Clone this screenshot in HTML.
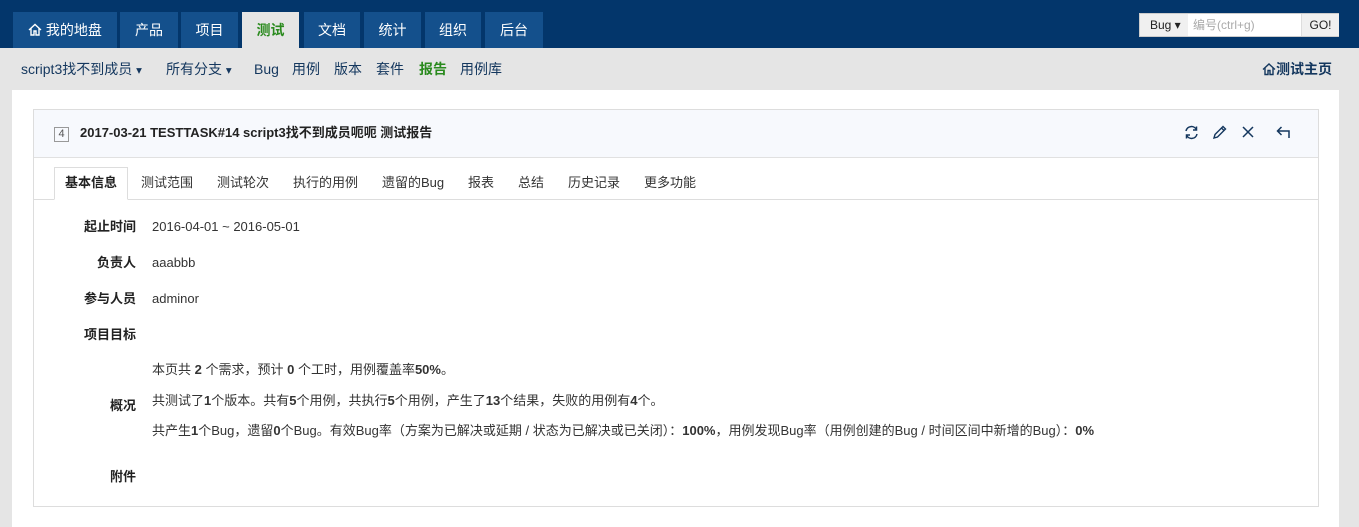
<!DOCTYPE html>
<html><head><meta charset="utf-8"><style>
*{margin:0;padding:0;box-sizing:border-box}
body{width:1359px;height:527px;overflow:hidden;background:#e5e5e5;font-family:"Liberation Sans","Noto Sans CJK SC",sans-serif;font-size:13px;line-height:16px;color:#333;position:relative}
.top{position:absolute;left:0;top:0;width:1359px;height:48px;background:#03366b}
.tab{position:absolute;top:12px;height:36px;background:#14508c;color:#fff;font-size:14px;line-height:36px;text-align:center}
.tab.act{background:#e5e5e5;color:#2a8a1e;font-weight:bold}
.sub{position:absolute;top:60px;font-size:14px;line-height:18px}
.sub span{position:absolute;white-space:nowrap;color:#14375e}
.panel{position:absolute;left:12px;top:90px;width:1327px;height:437px;background:#fff}
.box{position:absolute;left:33px;top:109px;width:1286px;height:398px;border:1px solid #ddd;background:#fff}
.hd{position:absolute;left:0;top:0;width:100%;height:48px;background:#f7f9fd;border-bottom:1px solid #e1e1e1}
.t{position:absolute;white-space:nowrap}
.lbl{position:absolute;font-weight:bold;color:#222;text-align:right;width:60px;left:76px}
.v{position:absolute;left:152px;white-space:nowrap;font-size:13px}
</style></head><body>
<div class="top"></div>
<div class="tab" style="left:13px;width:104px"><svg width="14" height="13" viewBox="0 0 14 13" style="vertical-align:-1px"><path d="M1 7L7 1.5 13 7M3 5.5V12H6V8H8V12H11V5.5" fill="none" stroke="#fff" stroke-width="1.4"/></svg> 我的地盘</div>
<div class="tab" style="left:120px;width:58px">产品</div>
<div class="tab" style="left:181px;width:57px">项目</div>
<div class="tab act" style="left:242px;width:57px">测试</div>
<div class="tab" style="left:304px;width:56px">文档</div>
<div class="tab" style="left:364px;width:57px">统计</div>
<div class="tab" style="left:425px;width:56px">组织</div>
<div class="tab" style="left:485px;width:58px">后台</div>
<div style="position:absolute;left:1139px;top:13px;width:200px;height:24px;background:#fff;border:1px solid #ccc"></div>
<div style="position:absolute;left:1140px;top:14px;width:48px;height:22px;background:#f0f0f0;font-size:12px;line-height:22px;padding-left:10px;color:#222">Bug ▾</div>
<div style="position:absolute;left:1193px;top:14px;font-size:12px;line-height:22px;color:#aaa">编号(ctrl+g)</div>
<div style="position:absolute;left:1301px;top:14px;width:38px;height:22px;background:#f0f0f0;border-left:1px solid #ddd;font-size:12px;line-height:22px;text-align:center;color:#222">GO!</div>
<div class="sub">
<span style="left:21px">script3找不到成员 <small>▾</small></span>
<span style="left:166px">所有分支 <small>▾</small></span>
<span style="left:254px">Bug</span>
<span style="left:292px">用例</span>
<span style="left:334px">版本</span>
<span style="left:376px">套件</span>
<span style="left:419px;color:#2a8a1e;font-weight:bold">报告</span>
<span style="left:460px">用例库</span>
<span style="left:1262px;font-weight:bold;font-size:14px"><svg width="14" height="14" viewBox="0 0 14 13" style="vertical-align:-2px"><path d="M1 7L7 1.5 13 7M3 5.5V12H6V8H8V12H11V5.5" fill="none" stroke="#14375e" stroke-width="1.4"/></svg>测试主页</span>
</div>
<div class="panel"></div>
<div class="box">
<div class="hd">
<div class="t" style="left:20px;top:17px;width:15px;height:15px;border:1px solid #999;font-size:11px;line-height:13px;text-align:center;color:#555">4</div>
<div class="t" style="left:46px;top:15px;font-size:13px;font-weight:bold;color:#222">2017-03-21 TESTTASK#14 script3找不到成员呃呃 测试报告</div>
<svg class="t" style="left:1150px;top:15px" width="15" height="15" viewBox="0 0 15 15" fill="none" stroke="#14375e" stroke-width="1.5"><path d="M2 6A5.5 5.5 0 0 1 12.5 5M13 9A5.5 5.5 0 0 1 2.5 10M12.5 1.5V5H9M2.5 13.5V10H6"/></svg>
<svg class="t" style="left:1178px;top:15px" width="15" height="15" viewBox="0 0 15 15" fill="none" stroke="#14375e" stroke-width="1.4"><path d="M2 13L3 9.5 11 1.5 13.5 4 5.5 12ZM9.5 3L12 5.5"/></svg>
<svg class="t" style="left:1207px;top:15px" width="14" height="14" viewBox="0 0 14 14" stroke="#14375e" stroke-width="1.5"><path d="M2 2L12 12M12 2L2 12"/></svg>
<svg class="t" style="left:1242px;top:15px" width="16" height="14" viewBox="0 0 16 14" fill="none" stroke="#14375e" stroke-width="1.5"><path d="M5.5 2L1.5 6 5.5 10M1.5 6H13V13"/></svg>
</div>
<div style="position:absolute;left:20px;top:57px;width:74px;height:33px;border:1px solid #ddd;border-bottom:1px solid #fff;background:#fff;font-weight:bold;line-height:30px;text-align:center;color:#222;z-index:2">基本信息</div>
<div style="position:absolute;left:0;top:89px;width:100%;border-top:1px solid #ddd"></div>
<div class="t" style="left:107px;top:65px">测试范围</div>
<div class="t" style="left:183px;top:65px">测试轮次</div>
<div class="t" style="left:259px;top:65px">执行的用例</div>
<div class="t" style="left:348px;top:65px">遗留的Bug</div>
<div class="t" style="left:434px;top:65px">报表</div>
<div class="t" style="left:484px;top:65px">总结</div>
<div class="t" style="left:534px;top:65px">历史记录</div>
<div class="t" style="left:610px;top:65px">更多功能</div>
</div>
<div class="lbl" style="top:219px">起止时间</div><div class="v" style="top:219px">2016-04-01 ~ 2016-05-01</div>
<div class="lbl" style="top:255px">负责人</div><div class="v" style="top:255px">aaabbb</div>
<div class="lbl" style="top:291px">参与人员</div><div class="v" style="top:291px">adminor</div>
<div class="lbl" style="top:327px">项目目标</div>
<div class="lbl" style="top:398px">概况</div>
<div class="v" style="top:362px">本页共 <b>2</b> 个需求，预计 <b>0</b> 个工时，用例覆盖率<b>50%</b>。</div>
<div class="v" style="top:393px">共测试了<b>1</b>个版本。共有<b>5</b>个用例，共执行<b>5</b>个用例，产生了<b>13</b>个结果，失败的用例有<b>4</b>个。</div>
<div class="v" style="top:423px">共产生<b>1</b>个Bug，遗留<b>0</b>个Bug。有效Bug率（方案为已解决或延期 / 状态为已解决或已关闭）：<b>100%</b>，用例发现Bug率（用例创建的Bug / 时间区间中新增的Bug）：<b>0%</b></div>
<div class="lbl" style="top:469px">附件</div>
</body></html>
